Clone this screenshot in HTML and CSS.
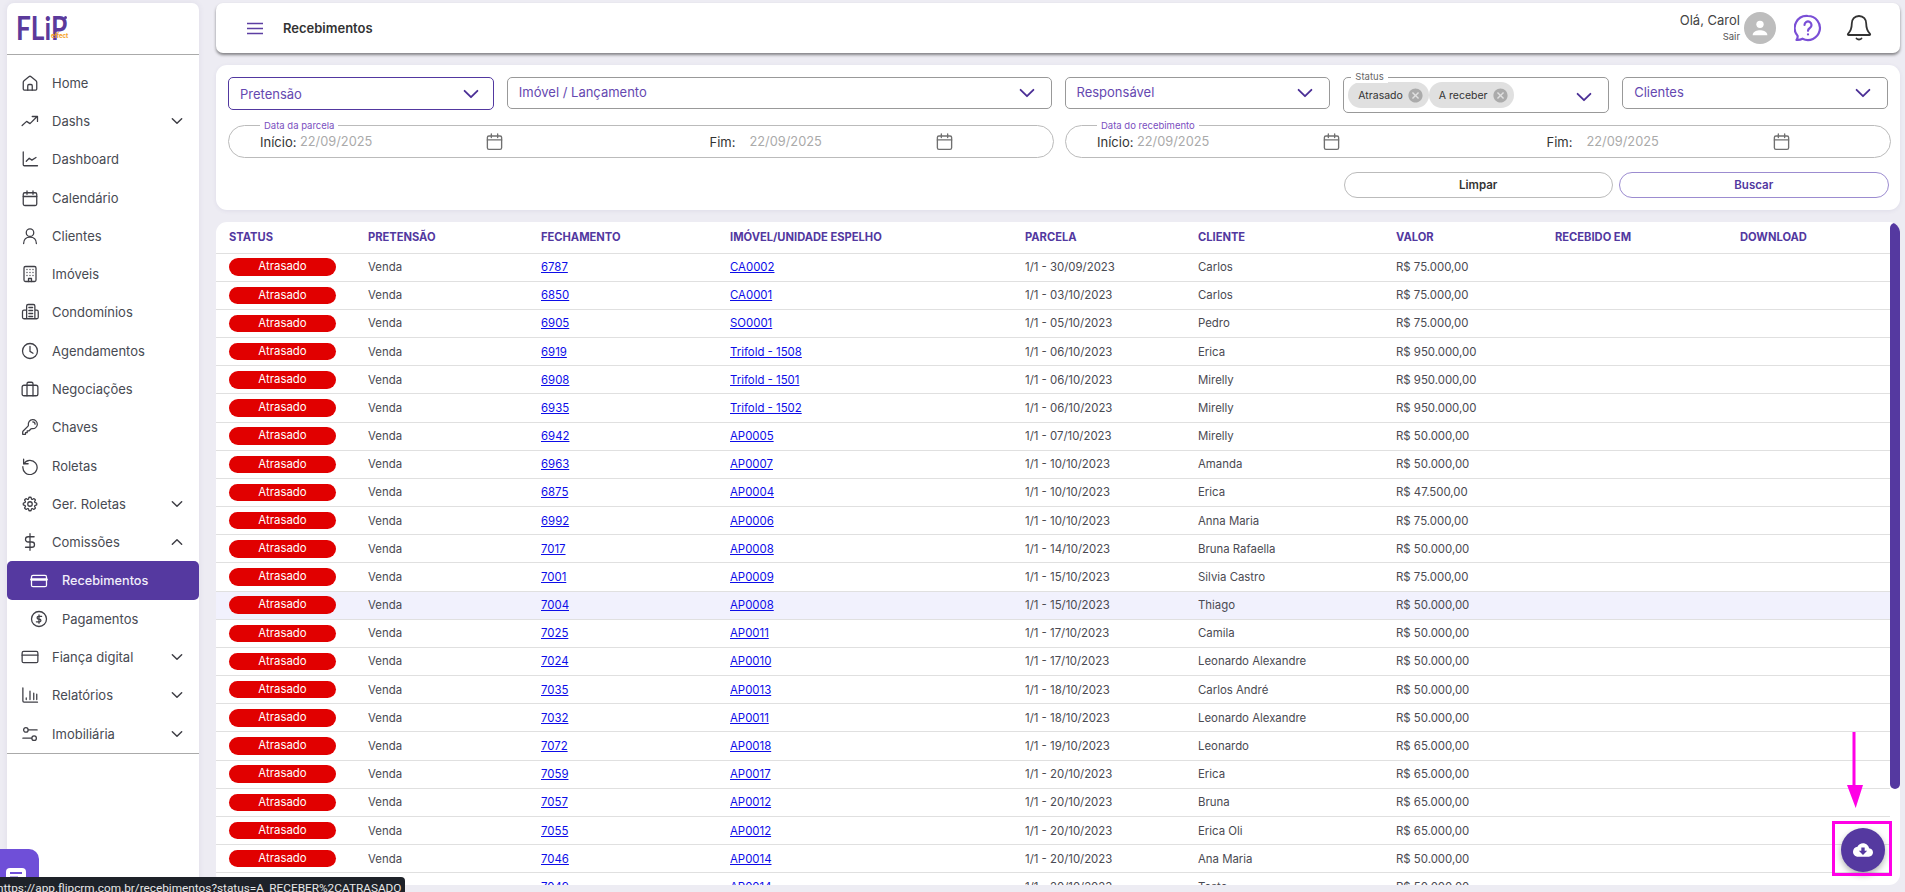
FILE: index.html
```html
<!DOCTYPE html>
<html lang="pt-BR">
<head>
<meta charset="utf-8">
<title>Recebimentos</title>
<link rel="stylesheet" href="styles.css">
</head>
<body>
<svg class="sprite" width="0" height="0">
  <defs>
    <symbol id="i-chev" viewBox="0 0 24 24"><path d="M5 8.500l7 7 7-7"/></symbol>
    <symbol id="i-up" viewBox="0 0 24 24"><path d="M5 15.500l7-7 7 7"/></symbol>
    <symbol id="i-cal" viewBox="0 0 24 24"><rect x="3" y="5" width="18" height="17" rx="2"/><path d="M3 10h18M8 2.500V7M16 2.500V7"/></symbol>
    <symbol id="i-x" viewBox="0 0 24 24"><path d="M12 2C6.470 2 2 6.470 2 12s4.470 10 10 10 10-4.470 10-10S17.530 2 12 2zm5 13.590L15.590 17 12 13.410 8.410 17 7 15.590 10.590 12 7 8.410 8.410 7 12 10.590 15.590 7 17 8.410 13.410 12 17 15.590z"/></symbol>
  </defs>
</svg>
<div class="app">
  <aside class="sidebar">
    <div class="brand"><span class="brand-word">FLiP</span><span class="brand-dot"></span><span class="brand-sub">effect</span></div>
    <nav class="nav">
      <a class="item"><svg class="ic" viewBox="0 0 24 24"><path d="M3 20V11c0-.9.4-1.600 1-2.100l6.500-5.300c.9-.7 2.100-.7 3 0L20 8.900c.6.5 1 1.200 1 2.100v9a1.500 1.500 0 0 1-1.500 1.500h-15A1.500 1.500 0 0 1 3 20z"/><path d="M9 21.500V15.500a1.500 1.500 0 0 1 1.500-1.500h3a1.500 1.500 0 0 1 1.500 1.500v6"/></svg><span class="lbl">Home</span></a>
      <a class="item"><svg class="ic" viewBox="0 0 24 24"><path d="M1.500 18l6-5.500 4.500 3 8.500-8.500M15 6h7v6.500"/></svg><span class="lbl">Dashs</span><svg class="chev"><use href="#i-chev"/></svg></a>
      <a class="item"><svg class="ic" viewBox="0 0 24 24"><path d="M3 2.500V19.500a1.500 1.500 0 0 0 1.500 1.500H22M7 15l4-4 3.500 2.500L20 10"/></svg><span class="lbl">Dashboard</span></a>
      <a class="item"><svg class="ic"><use href="#i-cal"/></svg><span class="lbl">Calendário</span></a>
      <a class="item"><svg class="ic" viewBox="0 0 24 24"><circle cx="12" cy="7.500" r="5"/><path d="M3.500 22c0-5.500 3.500-8.500 8.500-8.500s8.500 3 8.500 8.500"/></svg><span class="lbl">Clientes</span></a>
      <a class="item"><svg class="ic" viewBox="0 0 24 24"><rect x="4" y="2" width="16" height="20" rx="2"/><path d="M8 6h.01M12 6h.01M16 6h.01M8 10h.01M12 10h.01M16 10h.01M8 14h.01M12 14h.01M16 14h.01M10 22v-4h4v4"/></svg><span class="lbl">Imóveis</span></a>
      <a class="item"><svg class="ic" viewBox="0 0 24 24"><path d="M7.500 21V4a2 2 0 0 1 2-2h7a2 2 0 0 1 2 2v17M7.500 9.500H4a2 2 0 0 0-2 2V19a2 2 0 0 0 2 2h17a2 2 0 0 0 2-2v-7.500a2 2 0 0 0-2-2h-2.500M10.500 6h5M10.500 10h5M10.500 14h5M10.500 18h5"/></svg><span class="lbl">Condomínios</span></a>
      <a class="item"><svg class="ic" viewBox="0 0 24 24"><circle cx="12" cy="12" r="10"/><path d="M12 6v6.500l4 2.500"/></svg><span class="lbl">Agendamentos</span></a>
      <a class="item"><svg class="ic" viewBox="0 0 24 24"><rect x="1.500" y="7" width="21" height="14" rx="2.500"/><path d="M8 21V5a2 2 0 0 1 2-2h4a2 2 0 0 1 2 2v16"/></svg><span class="lbl">Negociações</span></a>
      <a class="item"><svg class="ic" viewBox="0 0 24 24"><path d="M15.750 5.250a3 3 0 013 3m3 0a6 6 0 01-7.029 5.912c-.563-.097-1.159.026-1.563.43L10.500 17.250H8.250v2.250H6v2.250H2.250v-2.818c0-.597.237-1.170.659-1.591l6.499-6.499c.404-.404.527-1 .43-1.563A6 6 0 1121.750 8.250z"/></svg><span class="lbl">Chaves</span></a>
      <a class="item"><svg class="ic" viewBox="0 0 24 24"><path d="M3.500 3v6h6"/><path d="M3.800 9A9.500 9.500 0 1 1 2.500 13"/></svg><span class="lbl">Roletas</span></a>
      <a class="item"><svg class="ic" viewBox="0 0 24 24"><path d="M10.343 3.940c.09-.542.56-.94 1.110-.94h1.093c.55 0 1.020.398 1.110.94l.149.894c.07.424.384.764.78.93.398.164.855.142 1.205-.108l.737-.527a1.125 1.125 0 011.450.12l.773.774c.39.389.44 1.002.12 1.450l-.527.737c-.25.35-.272.806-.107 1.204.165.397.505.71.93.78l.893.15c.543.09.94.56.94 1.109v1.094c0 .55-.397 1.020-.94 1.110l-.893.149c-.425.07-.765.383-.93.78-.165.398-.143.854.107 1.204l.527.738c.32.447.269 1.060-.12 1.450l-.774.773a1.125 1.125 0 01-1.449.12l-.738-.527c-.35-.25-.806-.272-1.203-.107-.397.165-.71.505-.781.929l-.149.894c-.09.542-.56.94-1.110.94h-1.094c-.55 0-1.019-.398-1.110-.94l-.148-.894c-.071-.424-.384-.764-.781-.93-.398-.164-.854-.142-1.204.108l-.738.527c-.447.32-1.060.269-1.450-.12l-.773-.774a1.125 1.125 0 01-.12-1.450l.527-.737c.25-.35.273-.806.108-1.204-.165-.397-.505-.71-.93-.78l-.894-.15c-.542-.09-.94-.56-.94-1.110v-1.094c0-.55.398-1.020.94-1.110l.894-.149c.424-.07.765-.383.93-.78.165-.398.143-.854-.107-1.204l-.527-.738a1.125 1.125 0 01.12-1.450l.773-.773a1.125 1.125 0 011.450-.12l.737.527c.35.25.807.272 1.204.107.397-.165.71-.505.78-.929l.15-.894z"/><path d="M15 12a3 3 0 11-6 0 3 3 0 016 0z"/></svg><span class="lbl">Ger. Roletas</span><svg class="chev"><use href="#i-chev"/></svg></a>
      <a class="item"><svg class="ic" viewBox="0 0 24 24"><path d="M12 1v22M17.500 5H9.500a3.500 3.500 0 0 0 0 7h5a3.500 3.500 0 0 1 0 7H6"/></svg><span class="lbl">Comissões</span><svg class="chev"><use href="#i-up"/></svg></a>
      <a class="item sub active"><svg class="ic" viewBox="0 0 24 24"><rect x="2" y="4.500" width="20" height="15" rx="2"/><path d="M2 10h20" class="band"/></svg><span class="lbl">Recebimentos</span></a>
      <a class="item sub"><svg class="ic" viewBox="0 0 24 24"><circle cx="12" cy="12" r="10"/><path d="M15.500 8.500h-4.200a1.800 1.800 0 0 0 0 3.600h1.400a1.800 1.800 0 0 1 0 3.600H8.500M12 6.500v11"/></svg><span class="lbl">Pagamentos</span></a>
      <a class="item"><svg class="ic" viewBox="0 0 24 24"><rect x="1.500" y="4.500" width="21" height="15" rx="2"/><path d="M1.500 9.500h21"/></svg><span class="lbl">Fiança digital</span><svg class="chev"><use href="#i-chev"/></svg></a>
      <a class="item"><svg class="ic" viewBox="0 0 24 24"><path d="M2.500 2.500V20a1.500 1.500 0 0 0 1.500 1.500h18M7 18v-2M12 18V7M17 18V9.500M21 18V11"/></svg><span class="lbl">Relatórios</span><svg class="chev"><use href="#i-chev"/></svg></a>
      <a class="item"><svg class="ic" viewBox="0 0 24 24"><circle cx="6.500" cy="6.500" r="3"/><circle cx="17.500" cy="17.500" r="3"/><path d="M10 6.500h11.500M2.500 17.500H14"/></svg><span class="lbl">Imobiliária</span><svg class="chev"><use href="#i-chev"/></svg></a>
    </nav>
  </aside>

  <main class="main">
    <header class="topbar">
      <svg class="burger" viewBox="0 0 16 13"><path d="M0 1.500h16M0 6.500h16M0 11.500h16"/></svg>
      <h1 class="title">Recebimentos</h1>
      <div class="user">
        <div class="user-text"><span class="hello">Olá, Carol</span><span class="logout">Sair</span></div>
        <div class="avatar"><svg viewBox="0 0 24 24"><circle cx="12" cy="8" r="4"/><path d="M4 19.500c0-3.500 5-5 8-5s8 1.500 8 5V20H4z"/></svg></div>
        <svg class="help" viewBox="0 0 28 28"><path d="M14 2a12 12 0 1 1-5.500 22.700C6.500 25.800 4.500 26 2.500 25.800c1-1.300 1.400-2.800 1-4.200A12 12 0 0 1 14 2z"/><path d="M10.500 11a3.500 3.500 0 1 1 5.300 3c-1.200.8-1.800 1.400-1.800 2.800M14 20.300v.2"/></svg>
        <svg class="bell" viewBox="0 0 26 28"><path d="M13 2c-4.500 0-7.200 3.400-7.200 7.500 0 5.500-1.300 7.800-3.800 10.300-.5.600-.1 1.200.6 1.200h20.800c.7 0 1.100-.6.600-1.200-2.500-2.500-3.800-4.800-3.800-10.300C20.200 5.400 17.500 2 13 2z"/><path d="M10.500 24.500c1.200 1.300 3.800 1.300 5 0"/></svg>
      </div>
    </header>

    <section class="filters">
      <div class="row-selects">
        <div class="select focused"><span>Pretensão</span><svg class="chev"><use href="#i-chev"/></svg></div>
        <div class="select wide"><span>Imóvel / Lançamento</span><svg class="chev"><use href="#i-chev"/></svg></div>
        <div class="select"><span>Responsável</span><svg class="chev"><use href="#i-chev"/></svg></div>
        <div class="select status">
          <span class="tag">Status</span>
          <span class="chip">Atrasado<svg class="chip-x"><use href="#i-x"/></svg></span>
          <span class="chip">A receber<svg class="chip-x"><use href="#i-x"/></svg></span>
          <svg class="chev"><use href="#i-chev"/></svg>
        </div>
        <div class="select"><span>Clientes</span><svg class="chev"><use href="#i-chev"/></svg></div>
      </div>
      <div class="row-dates">
        <div class="range">
          <span class="range-tag">Data da parcela</span>
          <div class="part"><span class="part-lbl">Início:</span><span class="part-date">22/09/2025</span><svg class="cal"><use href="#i-cal"/></svg></div>
          <div class="part"><span class="part-lbl">Fim:</span><span class="part-date">22/09/2025</span><svg class="cal"><use href="#i-cal"/></svg></div>
        </div>
        <div class="range">
          <span class="range-tag">Data do recebimento</span>
          <div class="part"><span class="part-lbl">Início:</span><span class="part-date">22/09/2025</span><svg class="cal"><use href="#i-cal"/></svg></div>
          <div class="part"><span class="part-lbl">Fim:</span><span class="part-date">22/09/2025</span><svg class="cal"><use href="#i-cal"/></svg></div>
        </div>
      </div>
      <div class="row-actions">
        <button class="btn">Limpar</button>
        <button class="btn primary">Buscar</button>
      </div>
    </section>

    <section class="table-card">
      <table class="grid">
        <colgroup><col class="c1"><col class="c2"><col class="c3"><col class="c4"><col class="c5"><col class="c6"><col class="c7"><col class="c8"><col class="c9"></colgroup>
        <thead><tr><th>Status</th><th>Pretensão</th><th>Fechamento</th><th>Imóvel/Unidade Espelho</th><th>Parcela</th><th>Cliente</th><th>Valor</th><th>Recebido em</th><th>Download</th></tr></thead>
        <tbody>
          <tr><td><span class="pill">Atrasado</span></td><td>Venda</td><td><a href="#">6787</a></td><td><a href="#">CA0002</a></td><td>1/1 - 30/09/2023</td><td>Carlos</td><td>R$ 75.000,00</td><td></td><td></td></tr>
          <tr><td><span class="pill">Atrasado</span></td><td>Venda</td><td><a href="#">6850</a></td><td><a href="#">CA0001</a></td><td>1/1 - 03/10/2023</td><td>Carlos</td><td>R$ 75.000,00</td><td></td><td></td></tr>
          <tr><td><span class="pill">Atrasado</span></td><td>Venda</td><td><a href="#">6905</a></td><td><a href="#">SO0001</a></td><td>1/1 - 05/10/2023</td><td>Pedro</td><td>R$ 75.000,00</td><td></td><td></td></tr>
          <tr><td><span class="pill">Atrasado</span></td><td>Venda</td><td><a href="#">6919</a></td><td><a href="#">Trifold - 1508</a></td><td>1/1 - 06/10/2023</td><td>Erica</td><td>R$ 950.000,00</td><td></td><td></td></tr>
          <tr><td><span class="pill">Atrasado</span></td><td>Venda</td><td><a href="#">6908</a></td><td><a href="#">Trifold - 1501</a></td><td>1/1 - 06/10/2023</td><td>Mirelly</td><td>R$ 950.000,00</td><td></td><td></td></tr>
          <tr><td><span class="pill">Atrasado</span></td><td>Venda</td><td><a href="#">6935</a></td><td><a href="#">Trifold - 1502</a></td><td>1/1 - 06/10/2023</td><td>Mirelly</td><td>R$ 950.000,00</td><td></td><td></td></tr>
          <tr><td><span class="pill">Atrasado</span></td><td>Venda</td><td><a href="#">6942</a></td><td><a href="#">AP0005</a></td><td>1/1 - 07/10/2023</td><td>Mirelly</td><td>R$ 50.000,00</td><td></td><td></td></tr>
          <tr><td><span class="pill">Atrasado</span></td><td>Venda</td><td><a href="#">6963</a></td><td><a href="#">AP0007</a></td><td>1/1 - 10/10/2023</td><td>Amanda</td><td>R$ 50.000,00</td><td></td><td></td></tr>
          <tr><td><span class="pill">Atrasado</span></td><td>Venda</td><td><a href="#">6875</a></td><td><a href="#">AP0004</a></td><td>1/1 - 10/10/2023</td><td>Erica</td><td>R$ 47.500,00</td><td></td><td></td></tr>
          <tr><td><span class="pill">Atrasado</span></td><td>Venda</td><td><a href="#">6992</a></td><td><a href="#">AP0006</a></td><td>1/1 - 10/10/2023</td><td>Anna Maria</td><td>R$ 75.000,00</td><td></td><td></td></tr>
          <tr><td><span class="pill">Atrasado</span></td><td>Venda</td><td><a href="#">7017</a></td><td><a href="#">AP0008</a></td><td>1/1 - 14/10/2023</td><td>Bruna Rafaella</td><td>R$ 50.000,00</td><td></td><td></td></tr>
          <tr><td><span class="pill">Atrasado</span></td><td>Venda</td><td><a href="#">7001</a></td><td><a href="#">AP0009</a></td><td>1/1 - 15/10/2023</td><td>Silvia Castro</td><td>R$ 75.000,00</td><td></td><td></td></tr>
          <tr class="hover"><td><span class="pill">Atrasado</span></td><td>Venda</td><td><a href="#">7004</a></td><td><a href="#">AP0008</a></td><td>1/1 - 15/10/2023</td><td>Thiago</td><td>R$ 50.000,00</td><td></td><td></td></tr>
          <tr><td><span class="pill">Atrasado</span></td><td>Venda</td><td><a href="#">7025</a></td><td><a href="#">AP0011</a></td><td>1/1 - 17/10/2023</td><td>Camila</td><td>R$ 50.000,00</td><td></td><td></td></tr>
          <tr><td><span class="pill">Atrasado</span></td><td>Venda</td><td><a href="#">7024</a></td><td><a href="#">AP0010</a></td><td>1/1 - 17/10/2023</td><td>Leonardo Alexandre</td><td>R$ 50.000,00</td><td></td><td></td></tr>
          <tr><td><span class="pill">Atrasado</span></td><td>Venda</td><td><a href="#">7035</a></td><td><a href="#">AP0013</a></td><td>1/1 - 18/10/2023</td><td>Carlos André</td><td>R$ 50.000,00</td><td></td><td></td></tr>
          <tr><td><span class="pill">Atrasado</span></td><td>Venda</td><td><a href="#">7032</a></td><td><a href="#">AP0011</a></td><td>1/1 - 18/10/2023</td><td>Leonardo Alexandre</td><td>R$ 50.000,00</td><td></td><td></td></tr>
          <tr><td><span class="pill">Atrasado</span></td><td>Venda</td><td><a href="#">7072</a></td><td><a href="#">AP0018</a></td><td>1/1 - 19/10/2023</td><td>Leonardo</td><td>R$ 65.000,00</td><td></td><td></td></tr>
          <tr><td><span class="pill">Atrasado</span></td><td>Venda</td><td><a href="#">7059</a></td><td><a href="#">AP0017</a></td><td>1/1 - 20/10/2023</td><td>Erica</td><td>R$ 65.000,00</td><td></td><td></td></tr>
          <tr><td><span class="pill">Atrasado</span></td><td>Venda</td><td><a href="#">7057</a></td><td><a href="#">AP0012</a></td><td>1/1 - 20/10/2023</td><td>Bruna</td><td>R$ 65.000,00</td><td></td><td></td></tr>
          <tr><td><span class="pill">Atrasado</span></td><td>Venda</td><td><a href="#">7055</a></td><td><a href="#">AP0012</a></td><td>1/1 - 20/10/2023</td><td>Erica Oli</td><td>R$ 65.000,00</td><td></td><td></td></tr>
          <tr><td><span class="pill">Atrasado</span></td><td>Venda</td><td><a href="#">7046</a></td><td><a href="#">AP0014</a></td><td>1/1 - 20/10/2023</td><td>Ana Maria</td><td>R$ 50.000,00</td><td></td><td></td></tr>
          <tr><td><span class="pill">Atrasado</span></td><td>Venda</td><td><a href="#">7049</a></td><td><a href="#">AP0014</a></td><td>1/1 - 20/10/2023</td><td>Teste</td><td>R$ 50.000,00</td><td></td><td></td></tr>
        </tbody>
      </table>
      <div class="thumb"></div>
    </section>
  </main>
</div>

<button class="fab"><svg viewBox="0 0 24 24"><path fill-rule="evenodd" d="M19.350 10.040C18.670 6.590 15.640 4 12 4 9.110 4 6.600 5.640 5.350 8.040 2.340 8.360 0 10.910 0 14c0 3.310 2.690 6 6 6h13c2.760 0 5-2.240 5-5 0-2.640-2.050-4.780-4.650-4.960zM17 13l-5 5-5-5h3V9h4v4h3z"/></svg></button>
<div class="mark-box"></div>
<svg class="mark-arrow" viewBox="0 0 17 77"><path d="M5.500 0h3v53H16L8.700 76 0 53h5.500z"/></svg>

<div class="chat"><svg viewBox="0 0 20 20"><path d="M4 0h12a4 4 0 0 1 4 4v8a4 4 0 0 1-4 4H4a4 4 0 0 1-4-4V4a4 4 0 0 1 4-4z"/><path class="chat-line" d="M4 5h12M4 9.500h8"/></svg></div>
<div class="statusbar">https://app.flipcrm.com.br/recebimentos?status=A_RECEBER%2CATRASADO</div>
</body>
</html>
```

FILE: styles.css
```css
* { box-sizing: border-box; }
html, body { margin: 0; height: 100%; }
body {
  background: #edecf3;
  font-family: "Inter", "Liberation Sans", sans-serif;
  color: #444;
  overflow: hidden;
}
.sprite { position: absolute; }
.app {
  display: flex;
  gap: 17px;
  height: 892px;
  padding: 3px 5px 7px 7px;
}

/* sidebar */
.sidebar {
  width: 192px;
  flex: none;
  background: #fff;
  border-radius: 7px;
  box-shadow: 0 0 6px rgba(60, 50, 110, .08);
}
.brand {
  position: relative;
  height: 52px;
  border-bottom: 1px solid #aaa;
  padding: 13px 0 0 9px;
}
.brand-word {
  display: block;
  width: 60px;
  height: 24px;
  font-family: "Lato", sans-serif;
  font-weight: 700;
  font-size: 32px;
  line-height: 24px;
  color: #5b3a9b;
  transform: scaleX(.82);
  transform-origin: left center;
}
.brand-dot {
  position: absolute;
  left: 57px;
  top: 13px;
  width: 3px;
  height: 3px;
  border-radius: 50%;
  background: #5b3a9b;
}
.brand-sub {
  position: absolute;
  left: 44px;
  top: 29px;
  font-size: 6px;
  line-height: 8px;
  font-weight: 700;
  color: #f5a11c;
}
.nav {
  padding: 8.500px 0 0;
  border-bottom: 1px solid #aaa;
  height: 699px;
}
.item {
  display: flex;
  align-items: center;
  height: 38.300px;
  padding: 0 14px 0 14px;
  font-size: 13px;
  color: #474a52;
}
.ic {
  width: 18px;
  height: 18px;
  flex: none;
  margin-right: 13px;
  fill: none;
  stroke: #3f3f46;
  stroke-width: 1.700;
  stroke-linecap: round;
  stroke-linejoin: round;
}
.lbl { flex: 1; }
.chev {
  width: 16px;
  height: 16px;
  flex: none;
  fill: none;
  stroke: #3f3f46;
  stroke-width: 2.200;
  stroke-linecap: round;
  stroke-linejoin: round;
}
.item.sub { padding-left: 23px; }
.item.sub .ic { margin-right: 14px; }
.item.active {
  background: #5539a0;
  color: #f1eefa;
  border-radius: 5px;
  font-weight: 500;
  font-size: 12.700px;
}
.item.active .ic { stroke: #fff; }
.item.active .band { stroke-width: 3.500; }

/* main */
.main {
  flex: 1;
  min-width: 0;
  display: flex;
  flex-direction: column;
  gap: 12px;
}
.topbar {
  height: 50px;
  flex: none;
  display: flex;
  align-items: center;
  padding: 0 28px 0 31px;
  background: #fff;
  border-radius: 7px;
  box-shadow: 0 2px 3px rgba(0, 0, 0, .45);
}
.burger {
  width: 16px;
  height: 13px;
  fill: none;
  stroke: #5d3fa3;
  stroke-width: 1.500;
}
.title {
  margin: 0 0 0 20px;
  font-size: 13px;
  font-weight: 600;
  color: #333;
}
.user {
  margin-left: auto;
  display: flex;
  align-items: center;
}
.user-text {
  display: flex;
  flex-direction: column;
  align-items: flex-end;
  margin-right: 4px;
}
.hello { font-size: 13px; line-height: 16px; color: #444; }
.logout { font-size: 9.500px; line-height: 14px; margin-top: 2px; color: #555; }
.avatar {
  width: 32px;
  height: 32px;
  border-radius: 50%;
  background: #bdbdbd;
  display: flex;
  align-items: center;
  justify-content: center;
}
.avatar svg { width: 22px; height: 22px; fill: #fff; }
.help {
  width: 28px;
  height: 28px;
  margin-left: 18px;
  fill: none;
  stroke: #7a4fd6;
  stroke-width: 2.200;
  stroke-linecap: round;
  stroke-linejoin: round;
}
.bell {
  width: 26px;
  height: 28px;
  margin-left: 24px;
  fill: none;
  stroke: #333;
  stroke-width: 1.800;
  stroke-linecap: round;
  stroke-linejoin: round;
}

/* filters */
.filters {
  flex: none;
  height: 145px;
  background: #fff;
  border-radius: 11px;
  padding: 12px 9px 0 12px;
  box-shadow: 0 1px 4px rgba(60, 50, 110, .08);
}
.row-selects {
  display: grid;
  grid-template-columns: repeat(6, 1fr);
  gap: 13px;
  align-items: start;
  padding-right: 3px;
}
.select {
  position: relative;
  display: flex;
  align-items: center;
  justify-content: space-between;
  height: 31.500px;
  padding: 0 13px 2px 11px;
  border: 1px solid #999;
  border-radius: 5px;
  font-size: 13px;
  color: #6548b0;
}
.select .chev {
  width: 22px;
  height: 22px;
  stroke: #4b2f96;
  margin-top: 3px;
  stroke-width: 2;
}
.select.focused {
  height: 33px;
  border-color: #5238a0;
  padding: 1px 11px 0 11px;
}
.select.focused .chev { margin-top: 0; }
.select.wide { grid-column: span 2; }
.select.status {
  height: 35.500px;
  justify-content: flex-start;
  padding: 0 13px 0 4px;
}
.select.status .chev { margin-left: auto; margin-top: 4px; }
.tag {
  position: absolute;
  left: 7px;
  top: -7px;
  padding: 0 4px;
  background: #fff;
  font-size: 9.500px;
  line-height: 12px;
  color: #666;
}
.chip {
  display: inline-flex;
  align-items: center;
  height: 26px;
  margin-top: 1px;
  padding: 0 5px 0 10px;
  gap: 4px;
  border-radius: 13px;
  background: #e0e0e0;
  font-size: 10.500px;
  color: #333;
}
.chip-x { width: 17px; height: 17px; fill: #ababab; }
.row-dates {
  display: grid;
  grid-template-columns: 1fr 1fr;
  gap: 11px;
  margin-top: 12.500px;
}
.range {
  position: relative;
  display: grid;
  grid-template-columns: 449.500px 1fr;
  height: 33px;
  padding-left: 31px;
  border: 1px solid #bbb;
  border-radius: 17px;
}
.range-tag {
  position: absolute;
  left: 31px;
  top: -6px;
  padding: 0 4px;
  background: #fff;
  font-size: 9.500px;
  line-height: 12px;
  color: #7a4fc0;
}
.part {
  display: flex;
  align-items: center;
  font-size: 13px;
}
.part-lbl { width: 40px; color: #333; }
.part-date { width: 185px; margin-bottom: 1px; color: #aaa; font-size: 12.800px; }
.cal {
  width: 19px;
  height: 19px;
  fill: none;
  stroke: #707070;
  stroke-width: 1.700;
  stroke-linecap: round;
  stroke-linejoin: round;
}
.row-actions {
  display: flex;
  justify-content: flex-end;
  gap: 5.500px;
  margin-top: 13.500px;
  padding-right: 2px;
}
.btn {
  width: 269.500px;
  height: 26px;
  padding: 0;
  background: #fff;
  border: 1px solid #bbb;
  border-radius: 13px;
  font: 600 11.500px "Inter", sans-serif;
  color: #333;
}
.btn.primary { width: 270.500px; border-color: #9c8cd0; color: #5238a0; }

/* table */
.table-card {
  position: relative;
  flex: 1;
  min-height: 0;
  overflow: hidden;
  background: #fff;
  border-radius: 11px;
  padding-right: 10px;
}
.grid {
  width: 100%;
  table-layout: fixed;
  border-collapse: collapse;
  font-size: 11.400px;
}
.c1 { width: 139px; }
.c2 { width: 173px; }
.c3 { width: 189px; }
.c4 { width: 295px; }
.c5 { width: 173px; }
.c6 { width: 198px; }
.c7 { width: 159px; }
.c8 { width: 185px; }
.grid th {
  height: 31px;
  padding: 0 0 0 13px;
  text-align: left;
  font-size: 11.150px;
  font-weight: 700;
  text-transform: uppercase;
  color: #5238a0;
  border-bottom: 1px solid #e0e0e0;
}
.grid td {
  height: 28.180px;
  padding: 0 0 0 13px;
  color: #4a4a52;
  border-bottom: 1px solid #e0e0e0;
}
.grid a { color: #0d0de8; }
.grid .hover td { background: #f1f1fd; }
.pill {
  display: block;
  width: 107px;
  height: 17.500px;
  line-height: 17.500px;
  border-radius: 9px;
  background: #e10000;
  color: #fff;
  text-align: center;
}
.thumb {
  position: absolute;
  right: 0;
  top: 1px;
  width: 10px;
  height: 566px;
  background: #5539a0;
  border-radius: 5px;
}

/* overlays */
.fab {
  position: fixed;
  left: 1841px;
  top: 828px;
  width: 44px;
  height: 44px;
  padding: 0;
  border: 0;
  border-radius: 50%;
  background: #5539a0;
  box-shadow: 0 3px 6px rgba(0, 0, 0, .3);
  display: flex;
  align-items: center;
  justify-content: center;
}
.fab svg { width: 20px; height: 20px; fill: #fff; }
.mark-box {
  position: fixed;
  left: 1832px;
  top: 821px;
  width: 60px;
  height: 55px;
  border: 3px solid #ff00e6;
}
.mark-arrow {
  position: fixed;
  left: 1847px;
  top: 732px;
  width: 17px;
  height: 77px;
  fill: #ff00e6;
}
.chat {
  position: fixed;
  left: 0;
  top: 849px;
  width: 39px;
  height: 43px;
  background: #6f4fd8;
  border-radius: 0 10px 0 0;
  padding: 19px 0 0 6px;
}
.chat svg { width: 20px; height: 20px; fill: #fff; }
.chat-line { fill: none; stroke: #6f4fd8; stroke-width: 2; }
.statusbar {
  position: fixed;
  left: 0;
  bottom: 0;
  width: 405px;
  height: 15px;
  overflow: hidden;
  padding: 2px 0 0;
  text-indent: -3px;
  white-space: nowrap;
  background: #1e2229;
  border-radius: 0 4px 0 0;
  font-family: "Roboto", sans-serif;
  font-size: 11.800px;
  line-height: 18px;
  color: #e8e8e8;
}
```
